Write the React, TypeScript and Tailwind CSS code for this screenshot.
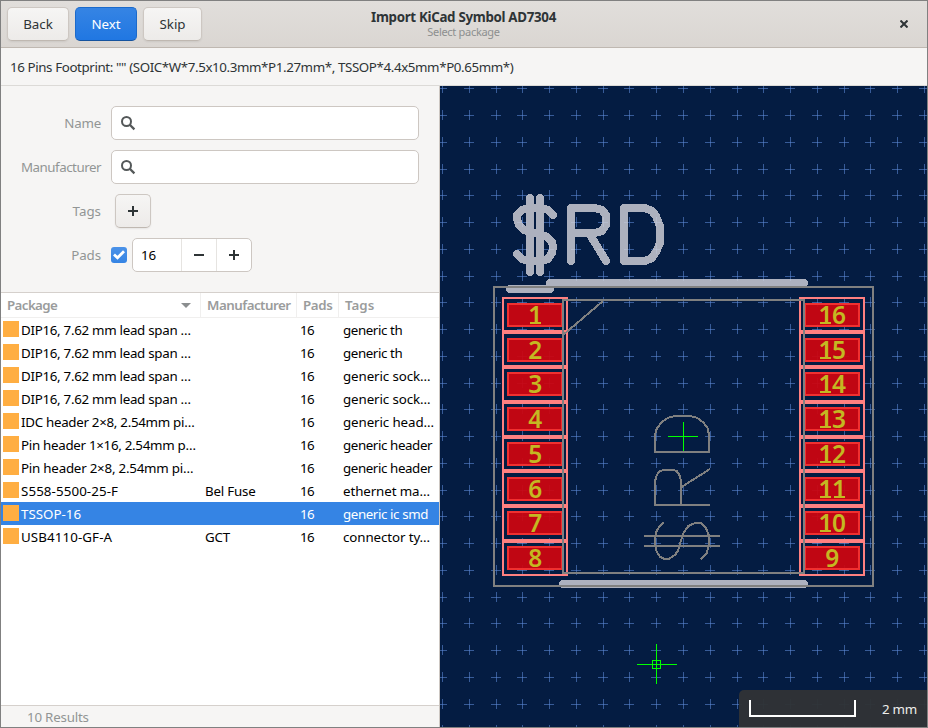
import React from "react";

const TIGHT = "tracking-[-0.29px]";
const LOOSE = "tracking-[0.1px]";

const rows = [
  ["DIP16, 7.62 mm lead span …", "", "generic th", TIGHT],
  ["DIP16, 7.62 mm lead span …", "", "generic th", TIGHT],
  ["DIP16, 7.62 mm lead span …", "", "generic sock…", TIGHT],
  ["DIP16, 7.62 mm lead span …", "", "generic sock…", TIGHT],
  ["IDC header 2×8, 2.54mm pi…", "", "generic head…", TIGHT],
  ["Pin header 1×16, 2.54mm p…", "", "generic header", TIGHT],
  ["Pin header 2×8, 2.54mm pi…", "", "generic header", "tracking-[-0.22px]"],
  ["S558-5500-25-F", "Bel Fuse", "ethernet ma…", LOOSE],
  ["TSSOP-16", "", "generic ic smd", "tracking-normal"],
  ["USB4110-GF-A", "GCT", "connector ty…", LOOSE],
];
const SELECTED = 8;

function Button({ children, primary, width }: { children: React.ReactNode; primary?: boolean; width: string }) {
  return (
    <button
      className={`flex h-[34px] items-center justify-center rounded-[5px] border ${width} ${
        primary
          ? "border-[#15539e] bg-linear-to-b from-[#3584e4] to-[#2077e2] text-white border-t-[#1b6acb] border-x-[#1b6acb]"
          : "border-[#cdc7c2] border-b-[#bfb8b1] bg-linear-to-b from-[#f6f5f4] to-[#edebe9] shadow-[0_1px_2px_rgba(0,0,0,0.07)]"
      }`}
    >
      {children}
    </button>
  );
}

function Plus() {
  return (
    <svg width="10" height="10" shapeRendering="crispEdges" fill="#2e3436">
      <path d="M0 4h10v2H0zM4 0h2v10H4z" />
    </svg>
  );
}

function SearchEntry() {
  return (
    <div className="flex h-[34px] w-[308px] items-center rounded-[5px] border border-[#cdc7c2] bg-white pl-[8px]">
      <svg width="16" height="16" viewBox="0 0 16 16" fill="none" stroke="#545859">
        <circle cx="6.5" cy="6.5" r="4.5" strokeWidth="2" />
        <path d="M9.8 9.8L14.4 14.4" strokeWidth="2.3" />
      </svg>
    </div>
  );
}

function Field({ label, tracking, children }: { label: string; tracking?: string; children: React.ReactNode }) {
  return (
    <div className="flex h-[34px] items-center">
      <div className={`mr-[10px] w-[100px] text-right whitespace-nowrap text-[#929595] ${tracking ?? "tracking-normal"}`}>{label}</div>
      {children}
    </div>
  );
}

const gridX = Array.from({ length: 19 }, (_, i) => Math.floor(656.7 + 26.77 * (i - 8)));
const gridY = Array.from({ length: 25 }, (_, i) => Math.floor(650.7 + 26.76 * (i - 21)));
const padTops = [303, 338, 372, 407, 442, 477, 511, 546];
const padGaps = [332, 367, 402, 437, 471, 506, 541];

function PadColumn({ x, labels }: { x: number; labels: number[] }) {
  return (
    <g>
      {padTops.map((y) => (
        <rect key={y} x={x + 1} y={y + 1} width="54" height="22" fill="#cc0510" fillOpacity="0.94" stroke="#f03030" strokeWidth="2" />
      ))}
      {padTops.map((y, i) => (
        <text
          key={y}
          x={x + 28}
          y={y + 21}
          textAnchor="middle"
          className="font-['Noto_Sans','DejaVu_Sans',sans-serif] text-[24.5px] font-semibold tracking-[-0.4px]"
          fill="#c4b822"
        >
          {labels[i]}
        </text>
      ))}
      {padTops.map((y, i) =>
        String(labels[i])
          .split("")
          .map((digit, k, all) =>
            digit === "1" ? (
              <rect
                key={`${y}-${k}`}
                x={x + 28 + (k - (all.length - 1) / 2) * 13.7 - 5}
                y={y + 19}
                width="11"
                height="2"
                fill="#c4b822"
              />
            ) : null,
          ),
      )}
    </g>
  );
}

function CourtyardColumn({ x }: { x: number }) {
  return (
    <g stroke="#ff8080" fill="none">
      <rect x={x + 1} y="298" width="64" height="277" strokeWidth="2" />
      {padGaps.map((y) => (
        <path key={y} d={`M${x} ${y}h66`} strokeWidth="4" />
      ))}
    </g>
  );
}

function Board() {
  return (
    <svg width="487" height="641" viewBox="440 86 487 641" className="block" shapeRendering="crispEdges">
      <rect x="440" y="86" width="487" height="641" fill="#041c42" />
      <g fill="#5d8ad8" fillOpacity="0.58">
        {gridY.flatMap((y) =>
          gridX.map((x) => (
            <React.Fragment key={`${x}-${y}`}>
              <rect x={x - 5} y={y} width="10" height="1" />
              <rect x={x} y={y - 5} width="1" height="10" />
            </React.Fragment>
          )),
        )}
      </g>
      <g opacity="0.83" stroke="#d0d0d8" strokeWidth="8" strokeLinecap="round" strokeLinejoin="round" fill="none">
        <path d="M550 283H804M510 289H550M563 584H804" />
        <path d="M530 198V272M540 198V272" />
        <path d="M553 215L548 210L541 208H529L522 210L517 215V219L519 225L524 230L530 232L540 234L547 237L552 242L553 247L552 253L548 259L541 261H529L522 259L517 254" />
        <path d="M571 261V208H595L602 210L606 215V225L602 231L595 233H571M589 233L606 261" />
        <path d="M624 208V261H645L652 258L656 252L660 243V226L656 216L652 211L645 208Z" />
      </g>
      <CourtyardColumn x={502} />
      <CourtyardColumn x={799} />
      <PadColumn x={507} labels={[1, 2, 3, 4, 5, 6, 7, 8]} />
      <PadColumn x={804} labels={[16, 15, 14, 13, 12, 11, 10, 9]} />
      <g stroke="#808080" strokeWidth="2" fill="none">
        <rect x="494" y="287" width="379" height="299" />
        <rect x="563" y="300" width="241" height="273" />
        <path d="M563 335L603 301" />
      </g>
      <g transform="translate(640 400) scale(0.33333)" stroke="#808080" strokeWidth="6" fill="none">
        <path d="M45 156V104L50 87L65 66L85 53L105 48H150L170 53L190 67L203 85L207 105V156M42 156H210" />
        <path d="M42 315H210M45 315V245L50 225L60 213L75 209H95L110 213L120 228L123 245V315M123 262L210 207" />
        <path d="M71 367L60 377L49 395L45 410V430L50 455L60 470L73 477L88 476L105 465L115 450L122 425L130 400L145 378L165 369H183L198 385L206 405L207 435L200 460L182 478" />
        <path d="M12 408H240M12 438H240" />
      </g>
      <g stroke="#00ff00" strokeWidth="1" fill="none">
        <path d="M668 436.5H698M683.5 422V451" />
        <path d="M637 664.5H677M656.5 644V684" />
        <rect x="652.5" y="660.5" width="8" height="8" />
      </g>
    </svg>
  );
}

export default function App() {
  return (
    <div className="flex h-[728px] w-[928px] flex-col overflow-hidden border border-[#808080] bg-[#f6f5f4] font-['Noto_Sans',sans-serif] text-[13.33px] leading-[18px] text-[#2e3436]">
      <header className="flex h-[47px] shrink-0 items-center justify-between border-b border-[#bfb8b1] bg-linear-to-b from-[#e1dedb] to-[#dad6d2] pl-[6px]">
        <div className="flex w-[200px] gap-[6px]">
          <Button width="w-[62px]">Back</Button>
          <Button width="w-[62px]" primary>Next</Button>
          <Button width="w-[59px]">Skip</Button>
        </div>
        <div className="pb-[2px] text-center whitespace-nowrap">
          <div className="leading-[18px] font-bold tracking-[-0.31px]">Import KiCad Symbol AD7304</div>
          <div className="text-[11px] leading-[12px] tracking-[-0.3px] text-[#8c8f8f]">Select package</div>
        </div>
        <div className="flex w-[207px] justify-end pr-[19px]">
          <svg width="8" height="8" viewBox="0 0 8 8" stroke="#2e3436" strokeWidth="2">
            <path d="M0.5 0.5L7.5 7.5M7.5 0.5L0.5 7.5" />
          </svg>
        </div>
      </header>
      <div className="flex h-[38px] shrink-0 items-center border-b border-[#dcdad7] pl-[9px] tracking-[-0.39px] whitespace-nowrap">
        16 Pins Footprint: "" (SOIC*W*7.5x10.3mm*P1.27mm*, TSSOP*4.4x5mm*P0.65mm*)
      </div>
      <div className="flex min-h-0 flex-1">
        <div className="flex w-[439px] shrink-0 flex-col border-r border-[#cdc7c2]">
          <div className="flex h-[206px] shrink-0 flex-col gap-[10px] pt-[20px]">
            <Field label="Name" tracking="tracking-[-0.2px]"><SearchEntry /></Field>
            <Field label="Manufacturer" tracking="tracking-[-0.48px]"><SearchEntry /></Field>
            <Field label="Tags">
              <div className="ml-[4px]">
                <Button width="w-[36px]"><Plus /></Button>
              </div>
            </Field>
            <Field label="Pads" tracking="tracking-[-0.1px]">
              <div className="mr-[5px] flex size-[16px] items-center justify-center rounded-[3px] bg-linear-to-b from-[#4b92e8] to-[#3584e4]">
                <svg width="12" height="10" viewBox="0 0 12 10" fill="none" stroke="white" strokeWidth="2.8">
                  <path d="M1 4.5L4.5 7.8L11 1.3" />
                </svg>
              </div>
              <div className="flex h-[34px] w-[120px] items-center rounded-[5px] border border-[#cdc7c2] bg-white">
                <div className="w-[48px] pl-[8px] text-black">16</div>
                <div className="flex h-full w-[35px] items-center justify-center border-l border-[#e6e4e1]">
                  <div className="h-[2px] w-[10px] bg-[#2e3436]" />
                </div>
                <div className="flex h-full w-[35px] items-center justify-center border-l border-[#e6e4e1]"><Plus /></div>
              </div>
            </Field>
          </div>
          <div className="flex min-h-0 flex-1 flex-col border-t border-[#d5d0cc] bg-white">
            <div className="flex h-[25px] shrink-0 items-center border-b border-[#f0efee] font-semibold text-[#9a9c9c]">
              <div className="flex h-full w-[200px] items-center justify-between border-r border-[#f0efee] pr-[9px] pl-[6px] tracking-[-0.6px]">
                Package
                <svg width="10" height="5" fill="#8b8e8f"><path d="M0 0h10l-5 5z" /></svg>
              </div>
              <div className="flex h-full w-[96px] items-center border-r border-[#f0efee] pl-[6px] tracking-[-0.5px]">Manufacturer</div>
              <div className="flex h-full w-[42px] items-center border-r border-[#f0efee] pl-[6px] tracking-[-0.4px]">Pads</div>
              <div className="pl-[6px]">Tags</div>
            </div>
            {rows.map(([name, maker, tags, tracking], i) => (
              <div
                key={i}
                className={`flex h-[23px] shrink-0 items-center whitespace-nowrap ${i === SELECTED ? "bg-[#3584e4] text-white" : "text-black"}`}
              >
                <div className="mb-[1px] ml-[2px] size-[16px] bg-[#ffae42]" />
                <div className={`w-[186px] pl-[2px] ${tracking}`}>{name}</div>
                <div className="w-[96px] tracking-[-0.2px]">{maker}</div>
                <div className="-ml-px w-[43px] tracking-[-0.5px]">16</div>
                <div className={tags.endsWith("…") ? "tracking-[-0.1px]" : "tracking-[-0.4px]"}>{tags}</div>
              </div>
            ))}
          </div>
          <div className="flex h-[22px] shrink-0 items-center border-t border-[#d5d0cc] pl-[26px] tracking-[-0.2px] text-[#929595]">10 Results</div>
        </div>
        <div className="relative min-w-0 flex-1 overflow-hidden">
          <Board />
          <div className="absolute right-0 bottom-0 flex h-[37px] w-[188px] items-start rounded-tl-[5px] bg-[#303336]/97 pt-[10px] pl-[10px] text-[#eeeeec]">
            <div className="h-[17px] w-[107px] border-2 border-t-0 border-white" />
            <div className="ml-[26px] tracking-[-0.3px]">2 mm</div>
          </div>
        </div>
      </div>
    </div>
  );
}
